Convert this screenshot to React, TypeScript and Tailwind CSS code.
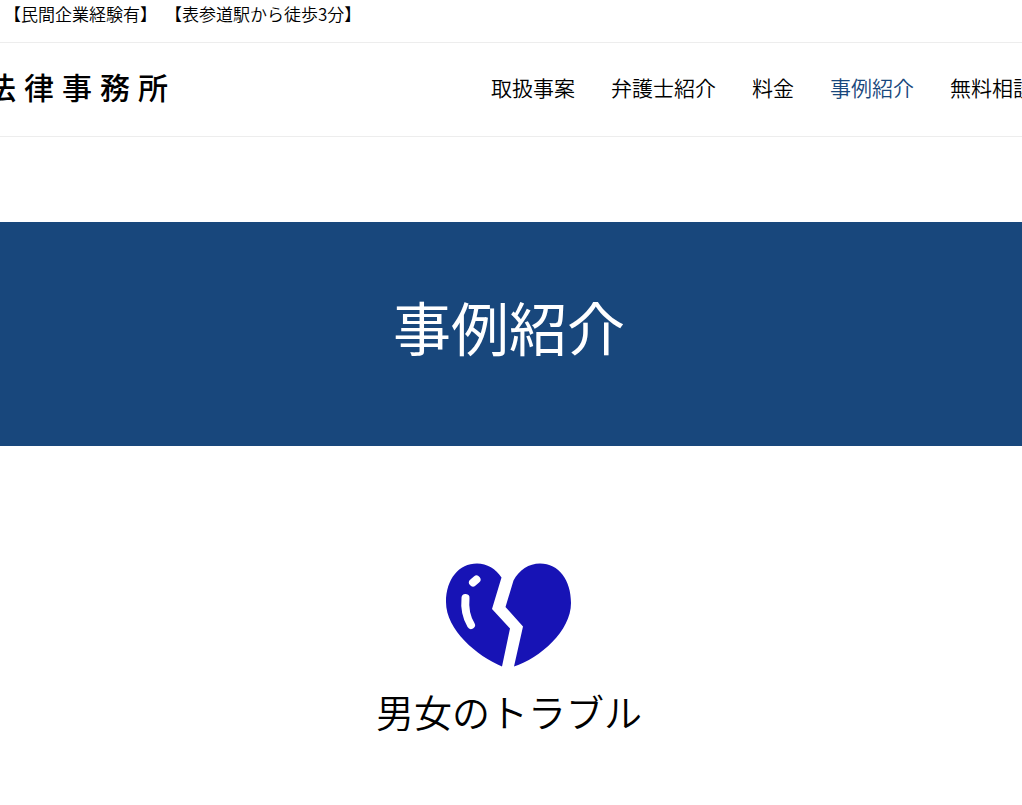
const navItems = [
  { label: "取扱事案", href: "#cases" },
  { label: "弁護士紹介", href: "#lawyers" },
  { label: "料金", href: "#fees" },
  { label: "事例紹介", href: "#examples", current: true },
  { label: "無料相談", href: "#contact" },
];

function BrokenHeart() {
  return (
    <svg viewBox="0 0 126 104" className="h-[104px] w-[126px]" aria-hidden="true">
      <path
        fill="#1713b5"
        d="M55.500 14.500C50 6 41 .5 31 .5C13 .5 0 16 0 39C0 67 31 93 56 103.500L64 65.500L46 46Z"
      />
      <path
        fill="#1713b5"
        d="M67.500 17.500C73 7 83 .5 94 .5C113 .5 125 17 125 40C125 68 94 95 68 103.500L77 63.500L59.500 44Z"
      />
      <path
        d="M27 19.500L30.500 16.500M19.500 35C18.500 45 20.500 54.500 25 62"
        fill="none"
        stroke="#fff"
        strokeWidth="8"
        strokeLinecap="round"
      />
    </svg>
  );
}

export default function App() {
  return (
    <div
      lang="ja"
      className="min-h-screen overflow-hidden bg-white font-['Noto_Sans_CJK_JP',sans-serif] font-[350] text-black"
    >
      <div className="border-b border-[#ededed] px-1 pt-0.5 pb-4">
        <p className="flex gap-2 text-[17px] leading-6 whitespace-nowrap">
          <span>【民間企業経験有】</span>
          <span>【表参道駅から徒歩3分】</span>
        </p>
      </div>

      <header className="flex items-center border-b border-[#ededed] pt-[21px] pb-[27px] whitespace-nowrap">
        <a
          href="#top"
          aria-label="法律事務所"
          className="-ml-[14px] flex gap-2 text-[30px] leading-[45px] font-medium"
        >
          {[..."法律事務所"].map((c) => (
            <span key={c}>{c}</span>
          ))}
        </a>
        <nav className="-mr-3 ml-auto">
          <ul className="flex gap-9 text-[21px] leading-7">
            {navItems.map((item) => (
              <li key={item.href}>
                <a
                  href={item.href}
                  aria-current={item.current ? "page" : undefined}
                  className={item.current ? "text-[#18477c]" : "text-black"}
                >
                  {item.label}
                </a>
              </li>
            ))}
          </ul>
        </nav>
      </header>

      <main className="pt-[85px]">
        <div className="bg-[#18477c] pt-16 pr-1 pb-20 text-center text-white">
          <h1 className="text-[58px] leading-[80px] font-normal">事例紹介</h1>
        </div>
        <section className="flex flex-col items-center pt-[117px] pr-1 pb-16">
          <BrokenHeart />
          <h2 className="mt-4 text-[38px] leading-[56px]">男女のトラブル</h2>
        </section>
      </main>
    </div>
  );
}
